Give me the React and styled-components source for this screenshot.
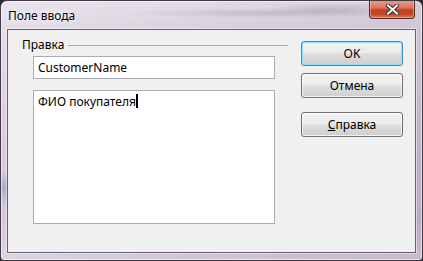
import styled, { createGlobalStyle } from 'styled-components'

const GlobalStyle = createGlobalStyle`
  html, body {
    margin: 0;
    padding: 0;
    background: #2b2b2b;
  }
  body {
    font-family: "Noto Sans", "Open Sans", sans-serif;
    font-size: 12px;
  }
`

const Window = styled.div`
  width: 423px;
  height: 261px;
  box-sizing: border-box;
  display: flex;
  flex-direction: column;
  border: 1px solid #3f3a44;
  border-radius: 7px 7px 4px 4px;
  box-shadow: inset 0 0 0 1px rgba(255, 255, 255, 0.55);
  background:
    linear-gradient(180deg, rgba(90,120,190,0) 66%, rgba(90,120,190,0.35) 72%, rgba(90,120,190,0) 80%) left / 7px 100% no-repeat,
    linear-gradient(90deg, rgba(255,255,255,0.25) 0%, rgba(255,255,255,0) 40%, rgba(120,100,130,0.12) 100%),
    linear-gradient(180deg, #e4dde7 0%, #dbd1df 12%, #cdbfd4 50%, #c6b5cd 85%, #d6c6da 100%);
  overflow: hidden;
`

const TitleBar = styled.div`
  height: 28px;
  flex: none;
  display: flex;
  align-items: flex-start;
  justify-content: space-between;
  padding: 0 7px 0 7px;
  background:
    radial-gradient(ellipse 150px 5px at 270px 12px, rgba(110, 100, 115, 0.22), rgba(110, 100, 115, 0) 100%),
    radial-gradient(ellipse 60px 6px at 330px 8px, rgba(90, 80, 95, 0.18), rgba(90, 80, 95, 0) 100%);
`

const Title = styled.span`
  margin-top: 7px;
  line-height: 15px;
  color: #000;
  text-shadow: 0 0 6px rgba(255, 255, 255, 0.9), 0 0 3px rgba(255, 255, 255, 0.9);
`

const CloseButton = styled.div`
  width: 46px;
  height: 19px;
  margin-top: -1px;
  box-sizing: border-box;
  display: flex;
  align-items: center;
  justify-content: center;
  border: 1px solid #4a2a26;
  border-top: none;
  border-radius: 0 0 4px 4px;
  background: linear-gradient(180deg, #e8a090 0%, #d8735c 45%, #c2401f 55%, #c4482a 80%, #dc7a52 100%);
  box-shadow: inset 0 0 0 1px rgba(255, 220, 210, 0.45);
`

const Client = styled.div`
  flex: 1;
  margin: 0 6px 7px 6px;
  display: flex;
  align-items: flex-start;
  background: #f0f0f0;
  border: 1px solid #66606a;
  box-shadow: 0 0 0 1px rgba(255, 255, 255, 0.45);
`

const Group = styled.div`
  width: 266px;
  margin: 7px 0 0 14px;
  display: flex;
  flex-direction: column;
`

const GroupHeader = styled.div`
  display: flex;
  align-items: center;
  gap: 4px;
  height: 15px;
  line-height: 15px;
  color: #000;
`

const GroupLine = styled.div`
  flex: 1;
  height: 0;
  border-top: 1px solid #a9a9a9;
  margin-top: 1px;
`

const TextBox = styled.div`
  box-sizing: border-box;
  width: 242px;
  height: ${p => p.$h}px;
  margin: ${p => p.$mt}px 0 0 11px;
  padding: ${p => (p.$multi ? '3px 4px' : '0 4px')};
  display: flex;
  align-items: ${p => (p.$multi ? 'flex-start' : 'center')};
  background: #fff;
  border: 1px solid #abadb3;
  line-height: 15px;
  color: #000;
  white-space: nowrap;
`

const Caret = styled.span`
  display: inline-block;
  width: 2px;
  height: 14px;
  background: #000;
`

const Buttons = styled.div`
  width: 102px;
  margin: 11px 0 0 13px;
  display: flex;
  flex-direction: column;
`

const Button = styled.div`
  box-sizing: border-box;
  height: 25px;
  margin-top: ${p => p.$mt || 0}px;
  display: flex;
  align-items: center;
  justify-content: center;
  border-radius: 3px;
  color: #000;
  border: 1px solid ${p => (p.$default ? '#3c8fd0' : '#707070')};
  background: linear-gradient(180deg, #f2f2f2 0%, #ebebeb 48%, #dddddd 52%, #cfcfcf 100%);
  box-shadow: inset 0 0 0 1px ${p => (p.$default ? '#8fdcf8' : 'rgba(255,255,255,0.75)')};
  u {
    text-decoration: underline;
  }
`

export default function App() {
  return (
    <>
      <GlobalStyle />
      <Window>
        <TitleBar>
          <Title>Поле ввода</Title>
          <CloseButton>
            <svg width="13" height="11" viewBox="0 0 13 11">
              <path d="M2 1.5 L11 9.5 M11 1.5 L2 9.5" stroke="#3b2a2a" strokeWidth="4" strokeLinecap="square" />
              <path d="M2 1.5 L11 9.5 M11 1.5 L2 9.5" stroke="#ffffff" strokeWidth="2" strokeLinecap="square" />
            </svg>
          </CloseButton>
        </TitleBar>
        <Client>
          <Group>
            <GroupHeader>
              <span>Правка</span>
              <GroupLine />
            </GroupHeader>
            <TextBox $h={23} $mt={4}>CustomerName</TextBox>
            <TextBox $h={134} $mt={11} $multi>
              ФИО покупателя<Caret />
            </TextBox>
          </Group>
          <Buttons>
            <Button $default>OK</Button>
            <Button $mt={7}>Отмена</Button>
            <Button $mt={14}>
              <span><u>С</u>правка</span>
            </Button>
          </Buttons>
        </Client>
      </Window>
    </>
  )
}
